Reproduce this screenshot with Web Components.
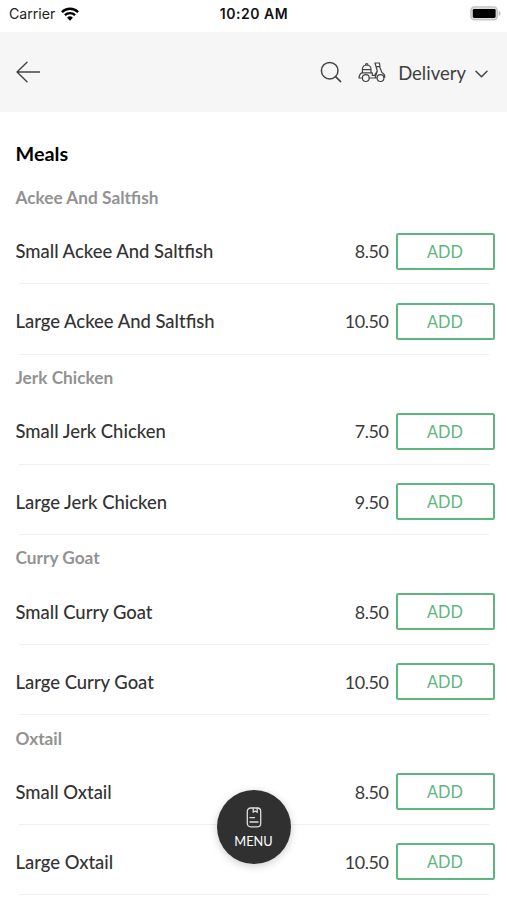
<!DOCTYPE html>
<html lang="en">
<head>
<meta charset="utf-8">
<title>Meals</title>
<style>
html, body { margin: 0; height: 900px; overflow: hidden; background: #fff; }
</style>
</head>
<body>
<meal-app></meal-app>
<script>
const define = (name, html) => customElements.define(name, class extends HTMLElement {
  constructor() {
    super();
    const t = document.createElement('template');
    t.innerHTML = html;
    this.attachShadow({ mode: 'open' }).append(t.content.cloneNode(true));
  }
});

define('status-bar', `<style>
:host { display: grid; grid-template-columns: 1fr auto 1fr; align-items: center; height: 32px; box-sizing: border-box; padding: 0 6px 5px 9px; font: 13.8px Inter, sans-serif; color: #222; }
.left { display: flex; align-items: center; gap: 6px; }
.carrier { font-size: 14.1px; }
.time { font-weight: 600; letter-spacing: .55px; color: #111; margin-right: 2px; font-size: 14px; }
.battery { justify-self: end; }
svg { display: block; }
</style>
<div class="left"><span class="carrier">Carrier</span>
<svg width="18" height="14" viewBox="0 0 18 14" fill="none" stroke="#000" stroke-width="2.4"><path d="M.9 5.1A11.6 11.6 0 0 1 17.1 5.1M3.9 8.2A7.3 7.3 0 0 1 14.1 8.2"/><path d="M9 13.8 6.1 10.8A4.1 4.1 0 0 1 11.9 10.8Z" fill="#000" stroke="none"/></svg></div>
<span class="time">10:20 AM</span>
<svg class="battery" width="31" height="15" viewBox="0 0 31 15"><rect x=".9" y=".9" width="26.4" height="13" rx="3.6" fill="#ddd" stroke="#c2c2c2" stroke-width="1.4"/><rect x="2.8" y="2.9" width="22.8" height="9" rx="1.4" fill="#000"/><path d="M28.8 5v5q1.7-.8 1.7-2.5T28.8 5" fill="#b5b5b5"/></svg>`);

define('top-bar', `<style>
:host { display: flex; align-items: center; height: 80px; background: #f6f6f6; box-sizing: border-box; padding: 0 19px 0 15px; color: #404040; font-size: 18.5px; }
svg { display: block; fill: none; stroke: #444; stroke-linecap: round; stroke-linejoin: round; }
.search { margin-left: auto; }
.scooter { margin-left: 16px; }
span { margin-left: 12px; line-height: 24px; padding-top: 1px; }
.chev { margin-left: 9px; margin-top: 3px; }
</style>
<svg width="26" height="22" viewBox="0 0 26 22" stroke-width="1.4"><path d="M24.5 11H2M12 1.2 2 11l10 9.8"/></svg>
<svg class="search" width="22" height="22" viewBox="0 0 22 22" stroke-width="1.5"><circle cx="9.7" cy="9.7" r="8.3"/><path d="m15.6 15.6 5 5"/></svg>
<svg class="scooter" width="28" height="21" viewBox="0 0 28 21" stroke-width="1.2"><path d="M4.4 10.5V7Q4.6 3.4 8.7 3q4.1.4 4.3 4v3.5M7.4 3Q7.4 1.5 8.7 1.5T10 3M4.4 7.6H13M3.7 10.8h10.6M3.8 10.8Q1 12.6 1 16h3.3M11.3 16h7.6M14.3 10.8v2.6h2.4l2.6-4.6L16.9 1h4.6l.4 3.6h-3.8M21.5 4.6l2.4 5.9q2.9 1.4 3 4.5l-.9.4M19.3 8.8l-2 6.4"/><circle cx="7.8" cy="16.1" r="3.4"/><circle cx="22.5" cy="16.1" r="3.4"/></svg>
<span>Delivery</span>
<svg class="chev" width="13" height="8" viewBox="0 0 13 8" stroke-width="1.5"><path d="m1 1.2 5.5 5.5L12 1.2"/></svg>`);

define('meal-group', `<style>
:host { display: block; }
h2 { margin: 0; height: 39.8px; padding-top: 11.6px; box-sizing: border-box; font-size: 17.25px; line-height: 24px; font-weight: 700; color: #929292; padding-left: 15.5px; }
</style><h2><slot name="title"></slot></h2><slot></slot>`);

define('meal-item', `<style>
:host { display: flex; align-items: center; height: 70.2px; box-sizing: border-box; padding: 4px 12.5px 0 15.5px; font-size: 18.43px; font-weight: 500; color: #333;
 background: linear-gradient(#f0f0f0, #f0f0f0) 19px 100% / 470px 1px no-repeat; }
.price { margin-left: auto; margin-right: 7px; font-weight: 400; font-size: 17.9px; letter-spacing: -.4px; color: #3a3a3a; }
button { width: 99px; height: 37px; box-sizing: border-box; padding: 0; border: 2px solid #5db67e; border-radius: 2.5px; background: #fff; color: #5db67e; font: 400 16.3px Lato, sans-serif; }
</style><span><slot></slot></span><span class="price"><slot name="price"></slot></span><button>ADD</button>`);

define('menu-button', `<style>
:host { position: absolute; left: 217px; top: 790px; width: 74px; height: 74px; border-radius: 50%; background: #303030; box-shadow: 0 2px 9px rgba(0,0,0,.2); display: flex; flex-direction: column; align-items: center; box-sizing: border-box; padding: 17px 1px 0 0; gap: 5px; color: #fff; font-size: 12.8px; line-height: 16px; }
svg { display: block; }
</style>
<svg width="16" height="21" viewBox="0 0 16 21" fill="none" stroke="#ddd" stroke-width="1.3" stroke-linecap="round" stroke-linejoin="round"><rect x="1.3" y="1" width="13.4" height="18.8" rx="3.2"/><path d="M7.2 1v4.3l2-1.3 2 1.3V1M4 10.7h4.5M4 15h8"/></svg>
<span>MENU</span>`);

const groups = [
  ['Ackee And Saltfish', '8.50', '10.50'],
  ['Jerk Chicken', '7.50', '9.50'],
  ['Curry Goat', '8.50', '10.50'],
  ['Oxtail', '8.50', '10.50']
];
define('meal-app', `<style>
:host { display: block; width: 507px; height: 900px; position: relative; overflow: hidden; background: #fff; font-family: Lato, sans-serif; }
h1 { margin: 0; padding: 29px 15.5px 0; height: 62.4px; box-sizing: border-box; font-size: 19.8px; line-height: 24px; font-weight: 700; color: #000; }
</style>
<status-bar></status-bar><top-bar></top-bar>
<h1>Meals</h1>
${groups.map(([n, s, l]) => `<meal-group><span slot="title">${n}</span><meal-item>Small ${n}<span slot="price">${s}</span></meal-item><meal-item>Large ${n}<span slot="price">${l}</span></meal-item></meal-group>`).join('')}
<menu-button></menu-button>`);
</script>
</body>
</html>
